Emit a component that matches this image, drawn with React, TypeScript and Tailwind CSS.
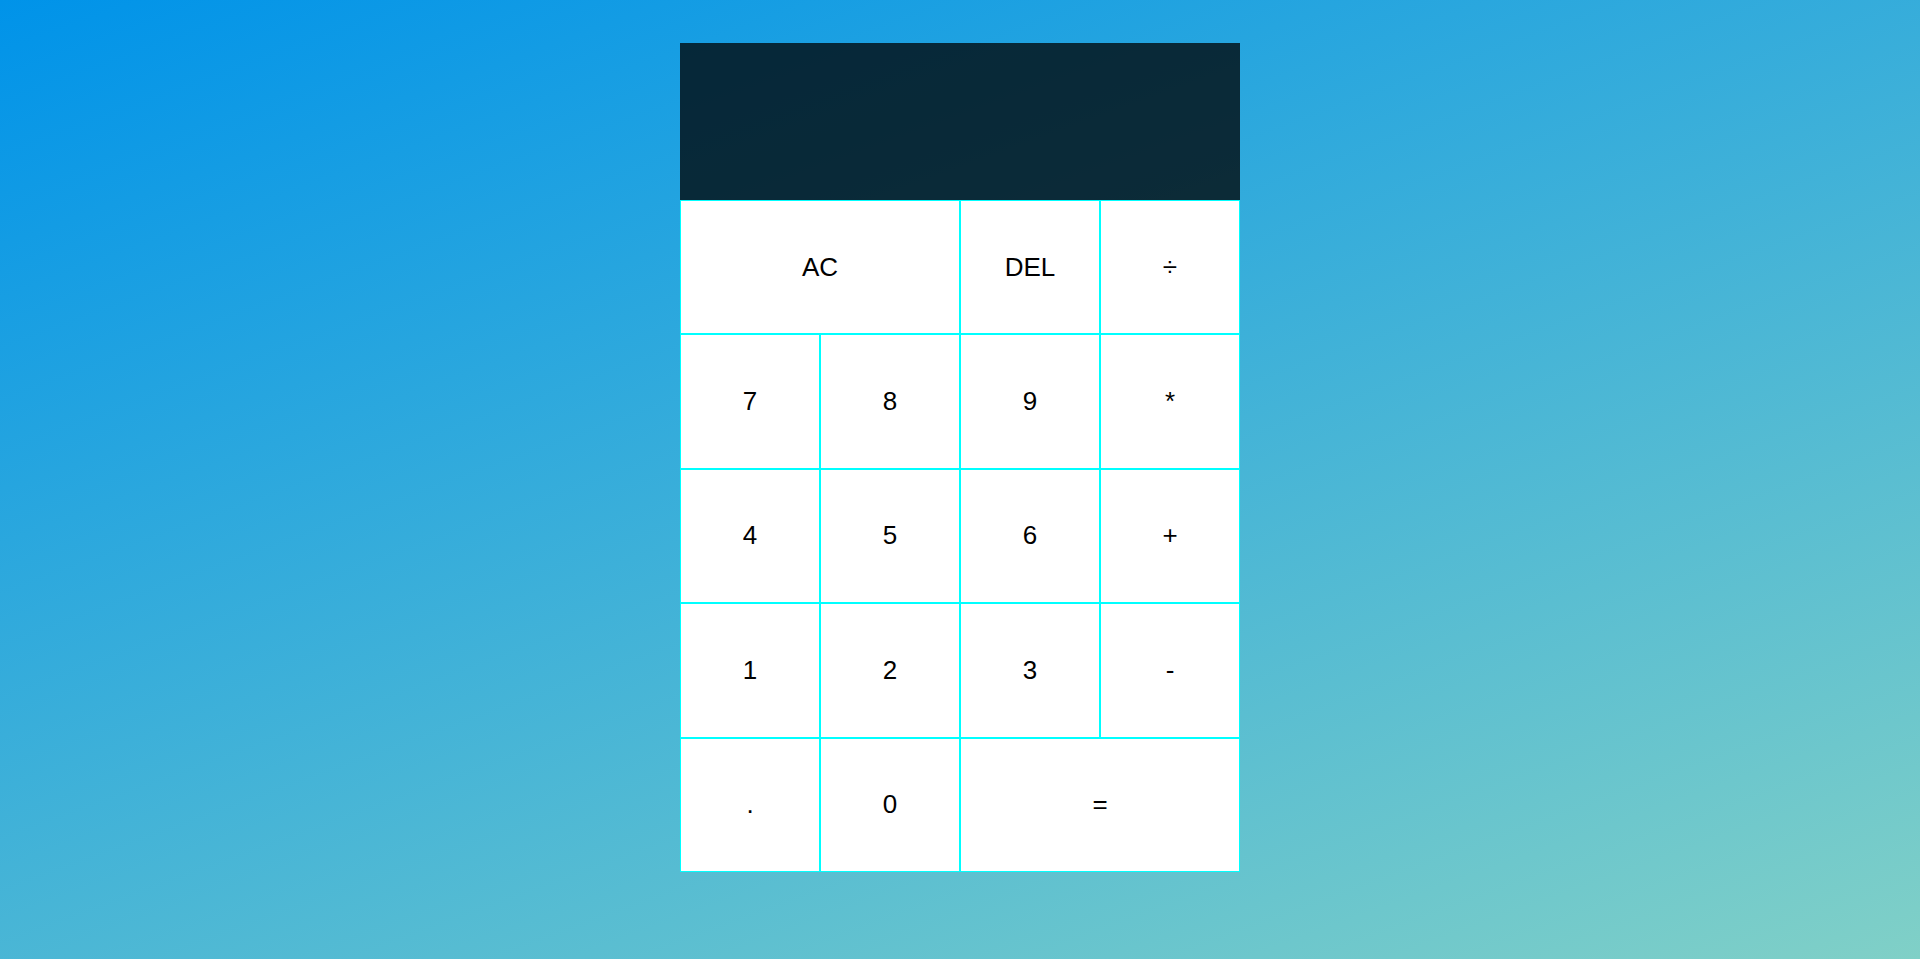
const keys: { label: string; wide?: boolean }[] = [
  { label: 'AC', wide: true },
  { label: 'DEL' },
  { label: '÷' },
  { label: '7' },
  { label: '8' },
  { label: '9' },
  { label: '*' },
  { label: '4' },
  { label: '5' },
  { label: '6' },
  { label: '+' },
  { label: '1' },
  { label: '2' },
  { label: '3' },
  { label: '-' },
  { label: '.' },
  { label: '0' },
  { label: '=', wide: true },
];

export default function App() {
  return (
    <div className="min-h-screen w-full bg-[linear-gradient(160deg,#0093E9_0%,#80D0C7_100%)] pt-[43px] font-['Liberation_Sans',Arial,sans-serif]">
      <div className="mx-auto grid w-[560px] grid-cols-[repeat(4,140px)] grid-rows-[157px_repeat(5,134.4px)]">
        <div className="col-span-4 bg-black/75" />
        {keys.map((k) => (
          <button
            key={k.label}
            className={`flex items-center justify-center border border-[#00ffff] bg-white text-[26px] text-black outline-none ${
              k.wide ? 'col-span-2' : ''
            }`}
          >
            {k.label}
          </button>
        ))}
      </div>
    </div>
  );
}
